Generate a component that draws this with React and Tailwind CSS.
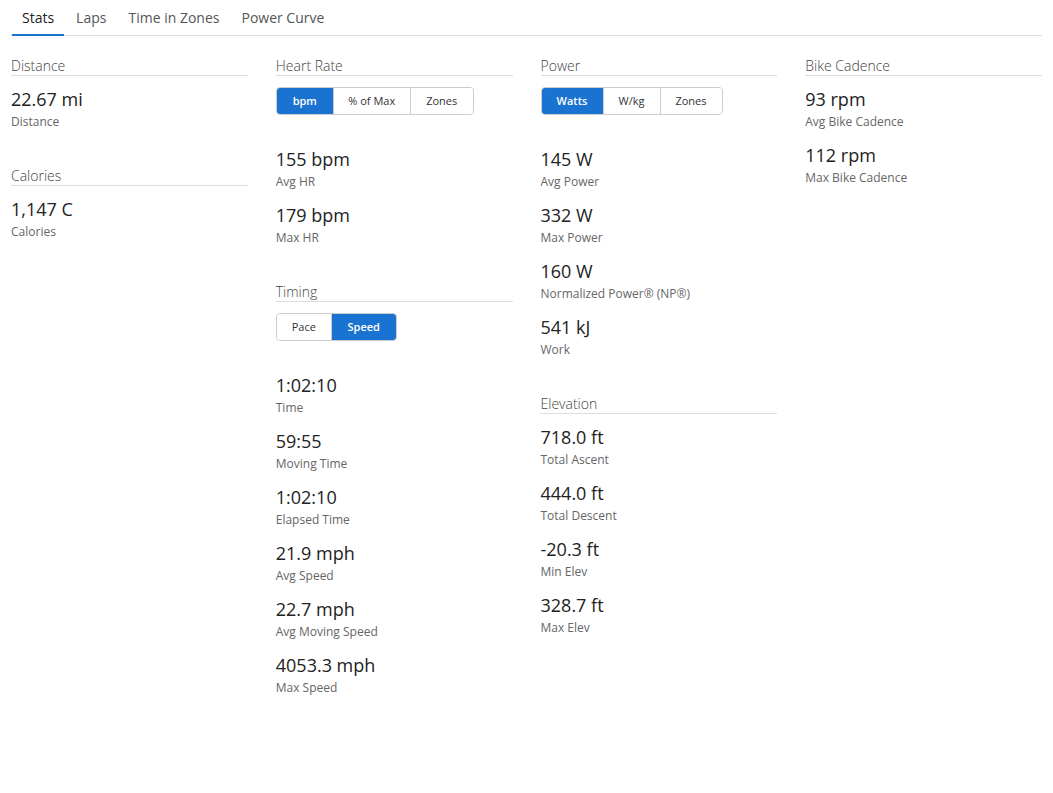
const tabs = ["Stats", "Laps", "Time in Zones", "Power Curve"];

const Stat = ({ value, label }) => (
  <div>
    <div className="text-[18px] leading-[24px] text-[#222]">{value}</div>
    <div className="mt-[2px] text-[12px] leading-[18px] text-[#666]">{label}</div>
  </div>
);

const Toggle = ({ options, active }) => (
  <div className="mb-[20px] flex h-[28px] w-fit overflow-hidden rounded-[4px] border border-[#ccc] text-[11px]">
    {options.map((o, i) => (
      <div
        key={o.label}
        style={{ width: o.w }}
        className={
          "flex items-center justify-center " +
          (i > 0 ? "border-l border-[#ccc] " : "") +
          (o.label === active ? "bg-[#1a73d1] font-semibold text-white" : "bg-white text-[#333]")
        }
      >
        {o.label}
      </div>
    ))}
  </div>
);

const Section = ({ title, toggle, items }) => (
  <div>
    <div className="h-[20px] border-b border-[#ddd] text-[14px] font-light leading-[19px] text-[#444]">{title}</div>
    <div className="mt-[11px] flex flex-col gap-[12px]">
      {toggle}
      {items.map((it) => (
        <Stat key={it[1]} value={it[0]} label={it[1]} />
      ))}
    </div>
  </div>
);

export default function App() {
  return (
    <div className="min-h-screen bg-white px-[11px] font-['Open_Sans',sans-serif]">
      <div className="flex gap-[2px] border-b border-[#ddd] pl-[1px]">
        {tabs.map((t, i) => (
          <div
            key={t}
            className={
              "-mb-px border-b-2 px-[10px] pb-[6px] pt-[8px] text-[14px] leading-[20px] " +
              (i === 0 ? "border-[#1a73d1] text-[#222]" : "border-transparent text-[#555]")
            }
          >
            {t}
          </div>
        ))}
      </div>

      <div className="mt-[20px] grid grid-cols-4 gap-[28px]">
        <div className="flex flex-col gap-[35px]">
          <Section title="Distance" items={[["22.67 mi", "Distance"]]} />
          <Section title="Calories" items={[["1,147 C", "Calories"]]} />
        </div>

        <div className="flex flex-col gap-[35px]">
          <Section
            title="Heart Rate"
            toggle={
              <Toggle
                active="bpm"
                options={[
                  { label: "bpm", w: 56 },
                  { label: "% of Max", w: 77 },
                  { label: "Zones", w: 63 },
                ]}
              />
            }
            items={[
              ["155 bpm", "Avg HR"],
              ["179 bpm", "Max HR"],
            ]}
          />
          <Section
            title="Timing"
            toggle={
              <Toggle
                active="Speed"
                options={[
                  { label: "Pace", w: 54 },
                  { label: "Speed", w: 65 },
                ]}
              />
            }
            items={[
              ["1:02:10", "Time"],
              ["59:55", "Moving Time"],
              ["1:02:10", "Elapsed Time"],
              ["21.9 mph", "Avg Speed"],
              ["22.7 mph", "Avg Moving Speed"],
              ["4053.3 mph", "Max Speed"],
            ]}
          />
        </div>

        <div className="flex flex-col gap-[35px]">
          <Section
            title="Power"
            toggle={
              <Toggle
                active="Watts"
                options={[
                  { label: "Watts", w: 61 },
                  { label: "W/kg", w: 57 },
                  { label: "Zones", w: 62 },
                ]}
              />
            }
            items={[
              ["145 W", "Avg Power"],
              ["332 W", "Max Power"],
              ["160 W", "Normalized Power® (NP®)"],
              ["541 kJ", "Work"],
            ]}
          />
          <Section
            title="Elevation"
            items={[
              ["718.0 ft", "Total Ascent"],
              ["444.0 ft", "Total Descent"],
              ["-20.3 ft", "Min Elev"],
              ["328.7 ft", "Max Elev"],
            ]}
          />
        </div>

        <div className="flex flex-col gap-[35px]">
          <Section
            title="Bike Cadence"
            items={[
              ["93 rpm", "Avg Bike Cadence"],
              ["112 rpm", "Max Bike Cadence"],
            ]}
          />
        </div>
      </div>
    </div>
  );
}
